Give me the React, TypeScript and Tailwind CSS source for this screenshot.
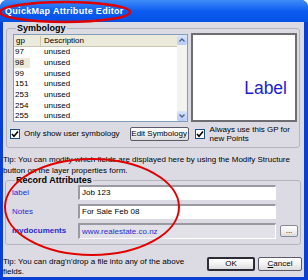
const ROWS = [
  { gp: "97", desc: "unused" },
  { gp: "98", desc: "unused", sel: true },
  { gp: "99", desc: "unused" },
  { gp: "151", desc: "unused" },
  { gp: "253", desc: "unused" },
  { gp: "254", desc: "unused" },
  { gp: "255", desc: "unused" },
];

function Check() {
  return (
    <span className="flex h-[10px] w-[10px] shrink-0 items-center justify-center border border-[#1c5180] bg-white">
      <svg width="8" height="8" viewBox="0 0 8 8">
        <path d="M1 4 L3 6.2 L7 1.5" fill="none" stroke="#000" strokeWidth="1.6" />
      </svg>
    </span>
  );
}

function XpButton({ children, className = "", strong = false }: { children: React.ReactNode; className?: string; strong?: boolean }) {
  return (
    <div
      className={
        "flex items-center justify-center rounded-[2px] bg-gradient-to-b from-[#ffffff] via-[#f2f2f2] to-[#dcdcdc] text-[8px] " +
        (strong ? "border-2 border-[#2c2c38] " : "border border-[#5a5a68] ") +
        className
      }
    >
      {children}
    </div>
  );
}

function ScrollArrow({ up }: { up?: boolean }) {
  return (
    <div className="flex h-[10px] w-[10px] items-center justify-center rounded-[2px] bg-gradient-to-b from-[#d8e4fc] to-[#b6cbf6]">
      <svg width="6" height="4" viewBox="0 0 6 4">
        <path d={up ? "M0.5 3.5 L3 1 L5.5 3.5" : "M0.5 0.5 L3 3 L5.5 0.5"} fill="none" stroke="#4d6185" strokeWidth="1.3" />
      </svg>
    </div>
  );
}

export default function App() {
  return (
    <div className="relative flex h-[280px] w-[308px] flex-col overflow-hidden rounded-t-[7px] bg-[#0a3fd6] font-['Liberation_Sans',Arial,sans-serif] text-[8px] leading-[10px] text-black">
      {/* Title bar */}
      <div className="flex h-[22px] shrink-0 items-center bg-gradient-to-b from-[#3f8cf8] via-[#0d5cf0] to-[#0552e4] pl-[5px]">
        <span className="text-[9px] font-bold tracking-[0.3px] text-white">QuickMap Attribute Editor</span>
      </div>

      {/* Body */}
      <div className="mb-[4px] ml-[3px] mr-[4px] flex flex-1 flex-col bg-[#dcdbe3]">
        {/* Symbology */}
        <fieldset className="ml-[3px] mr-[4px] mt-[1px] rounded-[3px] border border-[#b4b4bc] pb-[4px] pl-[6px] pr-[2px]">
          <legend className="ml-[3px] px-[1px] text-[9px] font-bold leading-[10px]">Symbology</legend>
          <div className="flex items-start gap-[3px]">
            <div className="mt-[1px] flex h-[88px] w-[175px] border border-[#7f9db9] bg-white">
              <div className="flex-1">
                <div className="flex h-[12px] items-center border-b border-[#c8c5b0] bg-[#ebeadb]">
                  <span className="w-[27px] border-r border-[#c8c5b0] pl-[2px]">gp</span>
                  <span className="pl-[3px]">Description</span>
                </div>
                {ROWS.map((r) => (
                  <div key={r.gp} className="flex h-[10.7px] items-center">
                    <span className={"w-[16px] pl-[1px] " + (r.sel ? "bg-[#ece9d8]" : "")}>{r.gp}</span>
                    <span className="pl-[14px]">{r.desc}</span>
                  </div>
                ))}
              </div>
              <div className="flex w-[10px] flex-col justify-between bg-[#f3f3ef]">
                <ScrollArrow up />
                <ScrollArrow />
              </div>
            </div>
            <div className="flex h-[89px] w-[106px] items-center justify-end border-2 border-[#6e6e72] bg-white pr-[8px]">
              <span className="mt-[20px] text-[17.5px] leading-[18px] text-[#1c1cd0]">Label</span>
            </div>
          </div>
          <div className="mt-[3px] flex items-center">
            <div className="-ml-[3px] flex items-center gap-[4px]">
              <Check />
              <span>Only show user symbology</span>
            </div>
            <XpButton className="ml-[10px] h-[14px] w-[59px]">Edit Symbology</XpButton>
            <div className="ml-[6px] flex items-center gap-[5px]">
              <Check />
              <span className="leading-[9px]">
                Always use this GP for
                <br />
                new Points
              </span>
            </div>
          </div>
        </fieldset>

        {/* Tip */}
        <p className="mt-[6px] leading-[11px]">
          Tip: You can modify which fields are displayed here by using the Modify Structure
          <br />
          button on the layer properties form.
        </p>

        {/* Record Attributes */}
        <fieldset className="ml-[2px] mr-[4px] -mt-[1px] rounded-[3px] border border-[#b4b4bc] pb-[5px] pl-[6px] pr-[2px]">
          <legend className="ml-[3px] px-[1px] text-[9px] font-bold leading-[10px]">Record Attributes</legend>
          <div className="flex flex-col gap-[4px]">
            <div className="flex items-center">
              <span className="w-[66px] text-[#2a2ad0]">label</span>
              <div className="flex h-[15px] w-[198px] items-center border-l-2 border-t-2 border-[#9a9aa2] border-b border-r border-b-white border-r-white bg-white pl-[2px]">
                Job 123
              </div>
            </div>
            <div className="flex items-center">
              <span className="w-[66px] text-[#2a2ad0]">Notes</span>
              <div className="flex h-[15px] w-[198px] items-center border-l-2 border-t-2 border-[#9a9aa2] border-b border-r border-b-white border-r-white bg-white pl-[2px]">
                For Sale Feb 08
              </div>
            </div>
            <div className="flex items-center">
              <span className="w-[66px] font-bold text-[#2a2ad0]">mydocuments</span>
              <div className="flex h-[16px] w-[198px] items-center border-l-2 border-t-2 border-[#9a9aa2] border-b border-r border-b-white border-r-white bg-[#e2e1e7] pl-[2px] text-[#2a2ad0]">
                www.realestate.co.nz
              </div>
              <XpButton className="ml-[4px] h-[12px] w-[18px] border-[#8a8a94]">...</XpButton>
            </div>
          </div>
        </fieldset>

        {/* Bottom */}
        <div className="mt-[12px] flex items-start">
          <p className="w-[200px] leading-[10px]">Tip: You can drag'n'drop a file into any of the above fields.</p>
          <XpButton strong className="ml-[4px] h-[14px] w-[48px]">OK</XpButton>
          <XpButton className="ml-[3px] h-[14px] w-[44px]">
            <span>
              <span className="underline">C</span>ancel
            </span>
          </XpButton>
        </div>
      </div>

      {/* Red annotation ellipses */}
      <svg className="pointer-events-none absolute left-0 top-0" width="308" height="280">
        <ellipse cx="65" cy="12" rx="65" ry="10" fill="none" stroke="#e00000" strokeWidth="2.5" />
        <ellipse cx="92" cy="207" rx="87" ry="48" fill="none" stroke="#e00000" strokeWidth="2" />
      </svg>
    </div>
  );
}
